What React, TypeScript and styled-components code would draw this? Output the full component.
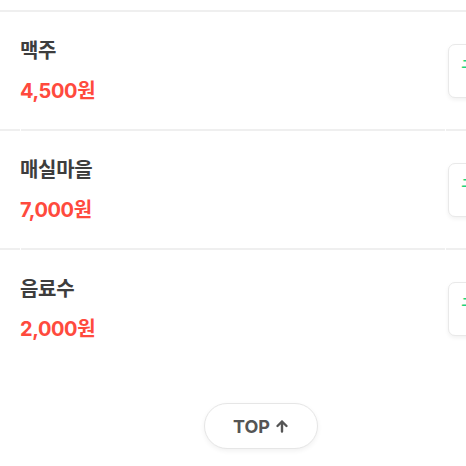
import React from "react";
import styled, { createGlobalStyle } from "styled-components";

const Global = createGlobalStyle`
  html, body { margin: 0; padding: 0; background: #fff; }
  body { overflow: hidden; font-family: Inter, "Noto Sans CJK KR", sans-serif; }
`;

const Page = styled.div`
  width: 522px;
  display: flex;
  flex-direction: column;
`;

const PrevTail = styled.div`
  height: 10px;
`;

const Divider = styled.div<{ $gaps?: boolean }>`
  height: 2px;
  background: ${(p) =>
    p.$gaps
      ? "linear-gradient(to right, #efefef 0 20px, #fff 20px 21px, #efefef 21px 445px, #fff 445px 446px, #efefef 446px)"
      : "#efefef"};
`;

const Row = styled.div`
  display: flex;
  align-items: center;
  justify-content: space-between;
  padding: 24px 20px;
  height: 117px;
  box-sizing: border-box;
`;

const Info = styled.div`
  display: flex;
  flex-direction: column;
  gap: 13px;
`;

const Name = styled.div`
  font-family: "Noto Sans CJK KR", sans-serif;
  font-size: 20px;
  line-height: 28px;
  font-weight: 700;
  color: #3d3d3d;
  letter-spacing: -0.3px;
`;

const Price = styled.div`
  font-family: Inter, "Noto Sans CJK KR", sans-serif;
  font-size: 20px;
  line-height: 28px;
  font-weight: 700;
  color: #ff4a3d;
  letter-spacing: -0.4px;
`;

const AddButton = styled.button`
  flex: none;
  width: 54px;
  height: 54px;
  border: 1px solid #e9e9e9;
  border-radius: 7px;
  background: #fff;
  box-shadow: 0 2px 4px rgba(0, 0, 0, 0.06);
  display: flex;
  align-items: center;
  justify-content: center;
  padding: 0 0 10px;
  font-family: "Noto Sans CJK KR", sans-serif;
  font-size: 15px;
  font-weight: 700;
  color: #1ed47e;
  white-space: nowrap;
  overflow: hidden;
`;

const Footer = styled.div`
  display: flex;
  justify-content: center;
  padding: 36px 0 20px;
`;

const TopButton = styled.button`
  width: 114px;
  height: 46px;
  border-radius: 23px;
  border: 1px solid #e6e6e6;
  background: #fff;
  box-shadow: 0 2px 5px rgba(0, 0, 0, 0.06);
  display: flex;
  align-items: center;
  justify-content: center;
  gap: 5px;
  font-family: Inter, "Noto Sans", sans-serif;
  font-size: 18px;
  font-weight: 700;
  color: #555;
  padding: 0;
`;

const items = [
  { name: "맥주", price: "4,500원" },
  { name: "매실마을", price: "7,000원" },
  { name: "음료수", price: "2,000원" },
];

export default function App() {
  return (
    <Page>
      <Global />
      <PrevTail />
      {items.map((it, i) => (
        <React.Fragment key={it.name}>
          <Divider $gaps={i > 0} />
          <Row>
            <Info>
              <Name>{it.name}</Name>
              <Price>{it.price}</Price>
            </Info>
            <AddButton>구매</AddButton>
          </Row>
        </React.Fragment>
      ))}
      <Footer>
        <TopButton>
          TOP
          <svg width="14" height="14" viewBox="0 0 14 14" fill="none">
            <path d="M7 12.5V2.5M2.5 7L7 2.5L11.5 7" stroke="#555" strokeWidth="2.4" strokeLinecap="round" strokeLinejoin="round" />
          </svg>
        </TopButton>
      </Footer>
    </Page>
  );
}
